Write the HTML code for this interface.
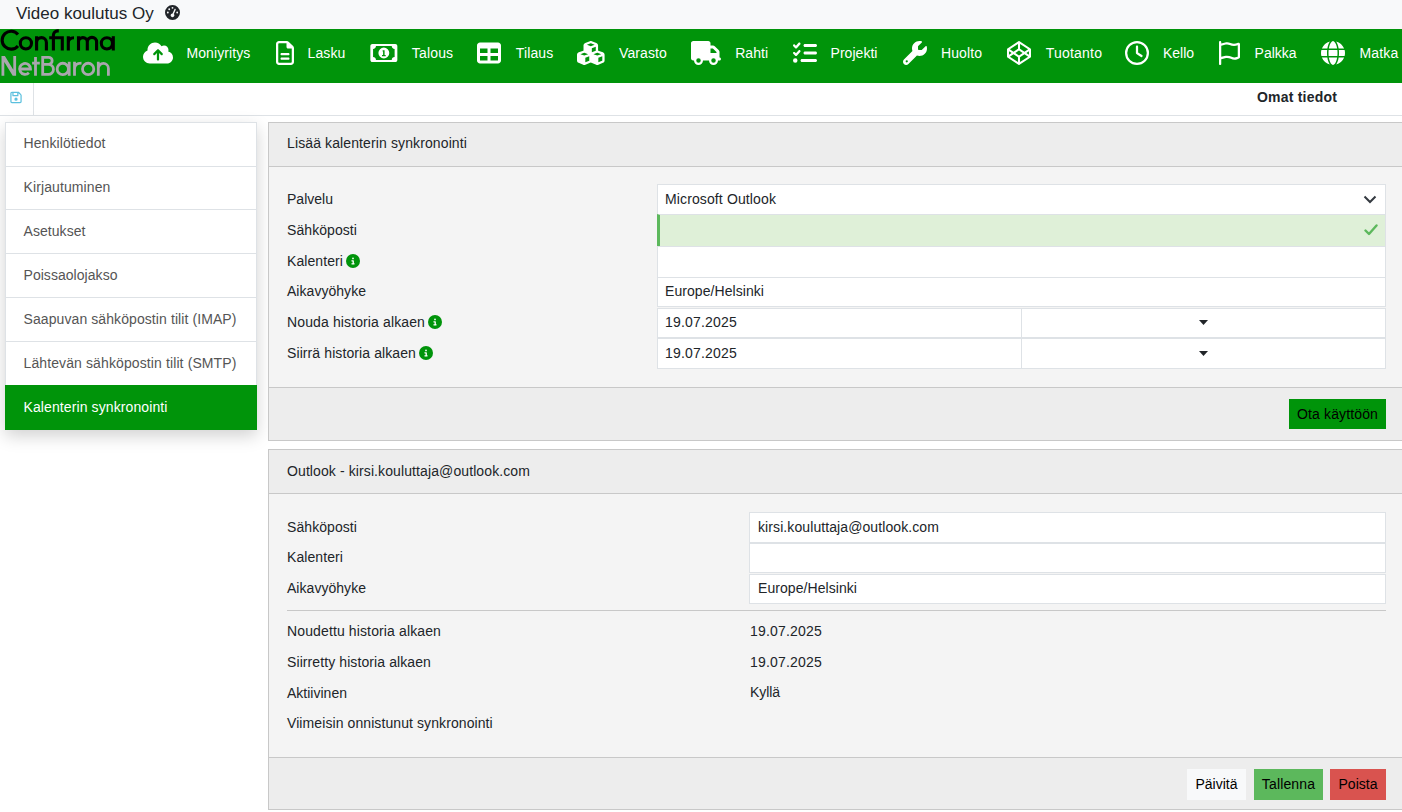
<!DOCTYPE html>
<html><head><meta charset="utf-8">
<style>
*{box-sizing:border-box}
html,body{margin:0;padding:0}
body{width:1402px;height:812px;overflow:hidden;position:relative;background:#fff;font-family:"Liberation Sans",sans-serif;font-size:14px;color:#212529}
.a{position:absolute;white-space:nowrap}
.t{line-height:20px;height:20px}
#top{left:0;top:0;width:1402px;height:29px;background:#f8f9fa}
#nav{left:0;top:29px;width:1402px;height:54px;background:#00940a;overflow:hidden}
.ni{position:absolute;top:14px;color:#fff;line-height:20px;font-size:14px;white-space:nowrap}
.ic{position:absolute;top:11.5px;height:24px;fill:#fff}
#tb{left:0;top:83px;width:1402px;height:33px;border-bottom:1px solid #dee2e6;background:#fff}
#menu{left:5px;top:122px;width:252px;height:308px;background:#fff;border:1px solid #dee2e6;box-shadow:0 6px 16px rgba(0,0,0,.18)}
.sep{left:6px;width:250px;height:1px;background:#dee2e6}
.mt{left:23.5px;line-height:20px;color:#555}
.panel{left:268px;width:1150px;border:1px solid #c8c8c8;background:#f4f4f4}
.ph{left:269px;width:1140px;background:#ededed;border-bottom:1px solid #c8c8c8}
.pf{left:269px;width:1140px;background:#ededed;border-top:1px solid #c8c8c8}
.inp{background:#fff;border:1px solid #dee2e6}
.L{left:287px;line-height:20px}
.info{display:inline-block;width:14px;height:14px;border-radius:50%;background:#00940a;vertical-align:-2px;margin-left:3px;position:relative}
.info svg{position:absolute;left:0;top:0}
.btn{position:absolute;height:31px;line-height:31px;text-align:center;color:#000}
</style></head><body>

<div id="top" class="a">
  <div class="a" style="left:16px;top:4px;font-size:17px;line-height:20px">Video koulutus Oy</div>
  <svg class="a" style="left:165px;top:5px" width="15" height="15" viewBox="0 0 512 512"><path fill="#212529" d="M0 256a256 256 0 1 1 512 0A256 256 0 1 1 0 256zM288 96a32 32 0 1 0 -64 0 32 32 0 1 0 64 0zM256 416c35.3 0 64-28.7 64-64c0-17.4-6.9-33.1-18.1-44.6L366 161.7c5.3-12.1-.2-26.3-12.3-31.6s-26.3 .2-31.6 12.3L257.9 288c-.6 0-1.3 0-1.9 0c-35.3 0-64 28.7-64 64s28.7 64 64 64zM176 144a32 32 0 1 0 -64 0 32 32 0 1 0 64 0zM96 288a32 32 0 1 0 0-64 32 32 0 1 0 0 64zm352-32a32 32 0 1 0 -64 0 32 32 0 1 0 64 0z"/></svg>
</div>

<div id="nav" class="a">
  <svg class="a" style="left:0;top:0" width="120" height="54" viewBox="0 0 120 54" fill="none" stroke-linecap="butt">
    <g stroke="#000" stroke-width="3.1">
      <path d="M17.96 5.45A8.95 8.95 0 1 0 17.96 16.95"/>
      <circle cx="25.9" cy="14.35" r="5.6"/>
      <path d="M36.6 21.5V7.2M36.6 13.5A4.9 4.9 0 0 1 46.4 13.5V21.5"/>
      <path d="M53.4 21.5V6.35A4.5 4.5 0 0 1 57.9 1.85H58.8M49.2 8.75H63.85M62.3 8.75V21.5"/>
      <path d="M68.3 21.5V7.2M68.3 14Q68.3 8.75 74 8.75"/>
      <path d="M78.5 21.5V7.2M78.5 13A4.4 4.4 0 0 1 87.3 13V21.5M87.3 13A4.65 4.65 0 0 1 96.6 13V21.5"/>
      <circle cx="106.9" cy="14.35" r="5.6"/>
      <path d="M113.3 7.2V21.5"/>
    </g>
    <g stroke="#aaa6ae" stroke-width="2.8">
      <path d="M1.5 46.8V26.9H4.9L13.3 40.8V26.9H16.1V46.8H12.7L4.3 32.9V46.8Z" fill="#aaa6ae" stroke="none"/>
      <path d="M19.6 40H30.5A5.45 5.45 0 1 0 28.9 43.7"/>
      <path d="M35.5 28V46.8M32.1 34.05H39.8"/>
      <path d="M41.3 28.3H48.6A3.55 3.55 0 0 1 48.6 35.4H42.7M42.7 28.3V46.8M42.7 35.4H48.4A5 5 0 0 1 48.4 45.4H41.3"/>
      <circle cx="62.8" cy="39.9" r="5.65"/>
      <path d="M69.2 32.8V46.8"/>
      <path d="M74.5 32.8V46.8M74.5 40Q74.5 34.2 81.5 34.2"/>
      <circle cx="88.15" cy="39.9" r="5.65"/>
      <path d="M98.3 32.8V46.8M98.3 39.5A5.05 5.05 0 0 1 108.4 39.5V46.8"/>
    </g>
  </svg>
  <!-- icons -->
  <svg class="ic" style="left:142.7px" width="30" viewBox="0 0 640 512"><path d="M144 480C64.5 480 0 415.5 0 336c0-62.8 40.2-116.2 96.2-135.9c-.1-2.7-.2-5.4-.2-8.1c0-88.4 71.6-160 160-160c59.3 0 111 32.2 138.7 80.2C409.9 102 428.3 96 448 96c53 0 96 43 96 96c0 12.2-2.3 23.8-6.4 34.6C596 238.4 640 290.1 640 352c0 70.7-57.3 128-128 128H144zm79-217c-9.4 9.4-9.4 24.6 0 33.9s24.6 9.4 33.9 0l39-39V392c0 13.3 10.7 24 24 24s24-10.7 24-24V257.9l39 39c9.4 9.4 24.6 9.4 33.9 0s9.4-24.6 0-33.9l-80-80c-9.4-9.4-24.6-9.4-33.9 0l-80 80z"/></svg>
  <div class="ni" style="left:186.4px;letter-spacing:0.099px">Moniyritys</div>
  <svg class="ic" style="left:276px" width="18" viewBox="0 0 384 512"><path d="M64 464c-8.8 0-16-7.2-16-16V64c0-8.8 7.2-16 16-16H224v80c0 17.7 14.3 32 32 32h80V448c0 8.8-7.2 16-16 16H64zM64 0C28.7 0 0 28.7 0 64V448c0 35.3 28.7 64 64 64H320c35.3 0 64-28.7 64-64V154.5c0-17-6.7-33.3-18.7-45.3L274.7 18.7C262.7 6.7 246.5 0 229.5 0H64zm56 256c-13.3 0-24 10.7-24 24s10.7 24 24 24H264c13.3 0 24-10.7 24-24s-10.7-24-24-24H120zm0 96c-13.3 0-24 10.7-24 24s10.7 24 24 24H264c13.3 0 24-10.7 24-24s-10.7-24-24-24H120z"/></svg>
  <div class="ni" style="left:307.5px;letter-spacing:0.128px">Lasku</div>
  <svg class="ic" style="left:370.2px" width="27.7" viewBox="0 0 576 512"><path fill-rule="evenodd" d="M44 64H532c24.3 0 44 19.7 44 44V404c0 24.3-19.7 44-44 44H44c-24.3 0-44-19.7-44-44V108C0 83.7 19.7 64 44 64zM120 108c0 34-28 62-62 62V342c34 0 62 28 62 62H456c0-34 28-62 62-62V170c-34 0-62-28-62-62H120zM288 140a116 116 0 1 1 0 232a116 116 0 1 1 0-232zM262 196H304V300H328V324H248V300H272V226H262Z"/></svg>
  <div class="ni" style="left:411.8px;letter-spacing:0.163px">Talous</div>
  <svg class="ic" style="left:477px" width="24" viewBox="0 0 512 512"><path fill-rule="evenodd" d="M64 32H448c35.3 0 64 28.7 64 64V416c0 35.3-28.7 64-64 64H64c-35.3 0-64-28.7-64-64V96C0 60.7 28.7 32 64 32zM64 160V256H224V160H64zM288 160V256H448V160H288zM64 320V416H224V320H64zM288 320V416H448V320H288z"/></svg>
  <div class="ni" style="left:515.8px;letter-spacing:0.109px">Tilaus</div>
  <svg class="ic" style="left:577.1px" width="27.6" viewBox="0 0 576 512" preserveAspectRatio="none"><path d="M290.8 48.6l78.4 29.7L288 109.5 206.8 78.3l78.4-29.7c1.8-.7 3.8-.7 5.7 0zM136 92.5V204.7c-1.3 .4-2.6 .8-3.9 1.3l-96 36.4C14.4 250.6 0 271.5 0 294.7V413.9c0 22.2 13.1 42.3 33.5 51.3l96 42.2c14.4 6.3 30.7 6.3 45.1 0L288 457.5l113.5 49.9c14.4 6.3 30.7 6.3 45.1 0l96-42.2c20.3-8.9 33.5-29.1 33.5-51.3V294.7c0-23.3-14.4-44.1-36.1-52.4l-96-36.4c-1.3-.5-2.6-.9-3.9-1.3V92.5c0-23.3-14.4-44.1-36.1-52.4l-96-36.4c-12.8-4.8-26.9-4.8-39.7 0l-96 36.4C150.4 48.4 136 69.3 136 92.5zM392 210.6l-82.4 31.2V152.6L392 121v89.6zM154.8 250.9l78.4 29.7L152 311.7 70.8 280.6l78.4-29.7c1.8-.7 3.8-.7 5.7 0zm18.8 204.4V354.8L256 323.2v95.9l-82.4 36.2zM421.2 250.9c1.8-.7 3.8-.7 5.7 0l78.4 29.7L424 311.7l-81.2-31.1 78.4-29.7zM523.2 421.2l-77.6 34.1V354.8L528 323.2v90.7c0 3.2-1.9 6-4.8 7.3z"/></svg>
  <div class="ni" style="left:619px;letter-spacing:0.107px">Varasto</div>
  <svg class="ic" style="left:690.5px" width="30" viewBox="0 0 640 512"><path d="M48 0C21.5 0 0 21.5 0 48V368c0 26.5 21.5 48 48 48H64c0 53 43 96 96 96s96-43 96-96H384c0 53 43 96 96 96s96-43 96-96h32c17.7 0 32-14.3 32-32s-14.3-32-32-32V288 256 237.3c0-17-6.7-33.3-18.7-45.3L512 114.7c-12-12-28.3-18.7-45.3-18.7H416V48c0-26.5-21.5-48-48-48H48zM416 160h50.7L544 237.3V256H416V160zM112 416a48 48 0 1 1 96 0 48 48 0 1 1 -96 0zm368-48a48 48 0 1 1 0 96 48 48 0 1 1 0-96z"/></svg>
  <div class="ni" style="left:735.2px;letter-spacing:0.063px">Rahti</div>
  <svg class="ic" style="left:792.5px" width="24" viewBox="0 0 512 512"><path d="M152.1 38.2c9.9 8.9 10.7 24 1.8 33.9l-72 80c-4.4 4.9-10.6 7.8-17.2 7.9s-12.9-2.4-17.6-7L7 113C-2.3 103.6-2.3 88.4 7 79s24.6-9.4 33.9 0l22.1 22.1 55.1-61.2c8.9-9.9 24-10.7 33.9-1.8zm0 160c9.9 8.9 10.7 24 1.8 33.9l-72 80c-4.4 4.9-10.6 7.8-17.2 7.9s-12.9-2.4-17.6-7L7 273c-9.4-9.4-9.4-24.6 0-33.9s24.6-9.4 33.9 0l22.1 22.1 55.1-61.2c8.9-9.9 24-10.7 33.9-1.8zM224 96c0-17.7 14.3-32 32-32H480c17.7 0 32 14.3 32 32s-14.3 32-32 32H256c-17.7 0-32-14.3-32-32zm0 160c0-17.7 14.3-32 32-32H480c17.7 0 32 14.3 32 32s-14.3 32-32 32H256c-17.7 0-32-14.3-32-32zM160 416c0-17.7 14.3-32 32-32H480c17.7 0 32 14.3 32 32s-14.3 32-32 32H192c-17.7 0-32-14.3-32-32zM48 368a48 48 0 1 1 0 96 48 48 0 1 1 0-96z"/></svg>
  <div class="ni" style="left:830.5px;letter-spacing:0.040px">Projekti</div>
  <svg class="ic" style="left:902.5px" width="24" viewBox="0 0 512 512"><path d="M352 320c88.4 0 160-71.6 160-160c0-15.3-2.2-30.1-6.2-44.2c-3.1-10.8-16.4-13.2-24.3-5.3l-76.8 76.8c-3 3-7.1 4.7-11.3 4.7H336c-8.8 0-16-7.2-16-16V118.6c0-4.2 1.7-8.3 4.7-11.3l76.8-76.8c7.9-7.9 5.4-21.2-5.3-24.3C382.1 2.2 367.3 0 352 0C263.6 0 192 71.6 192 160c0 19.1 3.4 37.5 9.5 54.5L19.9 396.1C7.2 408.8 0 426.1 0 444.1C0 481.6 30.4 512 67.9 512c18 0 35.3-7.2 48-19.9L297.5 310.5c17 6.2 35.4 9.5 54.5 9.5zM80 408a24 24 0 1 1 0 48 24 24 0 1 1 0-48z"/></svg>
  <div class="ni" style="left:941px;letter-spacing:0.089px">Huolto</div>
  <svg class="ic" style="left:1006.5px" width="24" viewBox="0 0 512 512"><path d="M502.3 159.7l-234-156c-8-4.9-16.5-5-24.6 0l-234 156C3.7 163.7 0 170.8 0 178v156c0 7.1 3.7 14.2 9.7 18.3l234 156c8 4.9 16.5 5 24.6 0l234-156c6-4 9.7-11.1 9.7-18.3V178c0-7.1-3.7-14.2-9.7-18.3zM278 63.1l172.3 114.9-76.9 51.4L278 165.7V63.1zm-44 0v102.6l-95.4 63.7-76.9-51.4L234 63.1zM44 219.1l55.1 36.9L44 292.8v-73.7zm190 229.7L61.7 334l76.9-51.4L234 346.3v102.6zm22-140.9l-77.7-52 77.7-52 77.7 52-77.7 52zm22 140.9V346.3l95.4-63.7 76.9 51.4L278 448.8zm190-156l-55.1-36.9L468 219.1v73.7z"/></svg>
  <div class="ni" style="left:1045.7px;letter-spacing:0.217px">Tuotanto</div>
  <svg class="ic" style="left:1125px" width="24" viewBox="0 0 512 512"><path d="M464 256A208 208 0 1 1 48 256a208 208 0 1 1 416 0zM0 256a256 256 0 1 0 512 0A256 256 0 1 0 0 256zM232 120V256c0 8 4 15.5 10.7 20l96 64c11 7.4 25.9 4.4 33.3-6.7s4.4-25.9-6.7-33.3L280 243.2V120c0-13.3-10.7-24-24-24s-24 10.7-24 24z"/></svg>
  <div class="ni" style="left:1163px;letter-spacing:-0.026px">Kello</div>
  <svg class="ic" style="left:1219px" width="21" viewBox="0 0 448 512"><path d="M48 24C48 10.7 37.3 0 24 0S0 10.7 0 24V64 350.5 400v88c0 13.3 10.7 24 24 24s24-10.7 24-24V388l80.3-20.1c41.1-10.3 84.6-5.5 122.5 13.4c44.2 22.1 95.5 24.8 141.7 7.4l34.7-13c12.5-4.7 20.8-16.6 20.8-30V66.1c0-23-24.2-38-44.8-27.7l-9.6 4.8c-46.3 23.2-100.8 23.2-147.1 0c-35.1-17.6-75.4-22-113.5-12.5L48 52V24zm0 77.5l96.6-24.2c27-6.7 55.5-3.6 80.4 8.8c54.9 27.4 118.7 29.7 175 6.8V334.7l-24.4 9.1c-33.7 12.6-71.2 10.7-103.4-5.4c-48.2-24.1-103.3-30.1-155.6-17.1L48 338.5v-237z"/></svg>
  <div class="ni" style="left:1254.6px;letter-spacing:-0.003px">Palkka</div>
  <svg class="ic" style="left:1321px" width="24" viewBox="0 0 512 512"><path d="M352 256c0 22.2-1.2 43.6-3.3 64H163.3c-2.2-20.4-3.3-41.8-3.3-64s1.2-43.6 3.3-64H348.7c2.2 20.4 3.3 41.8 3.3 64zm28.8-64H503.9c5.3 20.5 8.1 41.9 8.1 64s-2.8 43.5-8.1 64H380.8c2.1-20.6 3.2-42 3.2-64s-1.1-43.4-3.2-64zm112.6-32H376.7c-10-63.9-29.8-117.4-55.3-151.6c78.3 20.7 142 77.5 171.9 151.6zm-149.1 0H167.7c6.1-36.4 15.5-68.6 27-94.7c10.5-23.6 22.2-40.7 33.5-51.5C239.4 3.2 248.7 0 256 0s16.6 3.2 27.8 13.8c11.3 10.8 23 27.9 33.5 51.5c11.6 26 20.9 58.2 27 94.7zm-209 0H18.6C48.6 85.9 112.2 29.1 190.6 8.4C165.1 42.6 145.3 96.1 135.3 160zM8.1 192H131.2c-2.1 20.6-3.2 42-3.2 64s1.1 43.4 3.2 64H8.1C2.8 299.5 0 278.1 0 256s2.8-43.5 8.1-64zM194.7 446.6c-11.6-26-20.9-58.2-27-94.6H344.3c-6.1 36.4-15.5 68.6-27 94.6c-10.5 23.6-22.2 40.7-33.5 51.5C272.6 508.8 263.3 512 256 512s-16.6-3.2-27.8-13.8c-11.3-10.8-23-27.9-33.5-51.5zM135.3 352c10 63.9 29.8 117.4 55.3 151.6C112.2 482.9 48.6 426.1 18.6 352H135.3zm358.1 0c-30 74.1-93.6 130.9-171.9 151.6c25.5-34.2 45.2-87.7 55.3-151.6H493.4z"/></svg>
  <div class="ni" style="left:1359.4px;letter-spacing:0.175px">Matka</div>
</div>

<div id="tb" class="a">
  <svg class="a" style="left:10px;top:8px" width="12" height="13" viewBox="0 0 448 512"><path fill="#5bc0de" d="M48 96V416c0 8.8 7.2 16 16 16H384c8.8 0 16-7.2 16-16V170.5c0-4.2-1.7-8.3-4.7-11.3l33.9-33.9c12 12 18.7 28.3 18.7 45.3V416c0 35.3-28.7 64-64 64H64c-35.3 0-64-28.7-64-64V96C0 60.7 28.7 32 64 32H309.5c17 0 33.3 6.7 45.3 18.7l74.5 74.5-33.9 33.9L320.8 84.7c-.3-.3-.5-.5-.8-.8V184c0 13.3-10.7 24-24 24H104c-13.3 0-24-10.7-24-24V80H64c-8.8 0-16 7.2-16 16zm80-16v80H272V80H128zm32 240a64 64 0 1 1 128 0 64 64 0 1 1 -128 0z"/></svg>
  <div class="a" style="left:33px;top:0;width:1px;height:32px;background:#dee2e6"></div>
  <div class="a" style="left:1257px;top:4px;font-weight:bold;line-height:20px;color:#212529;letter-spacing:0.202px">Omat tiedot</div>
</div>

<div id="menu" class="a"></div>
<div class="a sep" style="top:166px"></div>
<div class="a sep" style="top:209px"></div>
<div class="a sep" style="top:253px"></div>
<div class="a sep" style="top:297px"></div>
<div class="a sep" style="top:341px"></div>
<div class="a" style="left:5px;top:385px;width:252px;height:45px;background:#00940a"></div>
<div class="a mt" style="top:133px;letter-spacing:0.082px">Henkilötiedot</div>
<div class="a mt" style="top:177px;letter-spacing:0.108px">Kirjautuminen</div>
<div class="a mt" style="top:221px;letter-spacing:0.058px">Asetukset</div>
<div class="a mt" style="top:265px;letter-spacing:0.044px">Poissaolojakso</div>
<div class="a mt" style="top:309px;letter-spacing:0.088px">Saapuvan sähköpostin tilit (IMAP)</div>
<div class="a mt" style="top:353px;letter-spacing:0.112px">Lähtevän sähköpostin tilit (SMTP)</div>
<div class="a mt" style="top:397px;color:#fff;letter-spacing:0.103px">Kalenterin synkronointi</div>

<!-- Panel 1 -->
<div class="a panel" style="top:122px;height:319px"></div>
<div class="a ph" style="top:123px;height:44px"></div>
<div class="a pf" style="top:387px;height:53px"></div>
<div class="a L" style="top:133px;letter-spacing:0.115px">Lisää kalenterin synkronointi</div>
<div class="a L" style="top:189px;letter-spacing:0.012px">Palvelu</div>
<div class="a L" style="top:220px;letter-spacing:0.073px">Sähköposti</div>
<div class="a L" style="top:251px;letter-spacing:0.083px">Kalenteri<span class="info"><svg width="14" height="14" viewBox="0 0 512 512"><path fill="#fff" d="M256 128a32 32 0 1 1 0 64a32 32 0 1 1 0-64zM216 224h48c13.3 0 24 10.7 24 24v88h8c13.3 0 24 10.7 24 24s-10.7 24-24 24H216c-13.3 0-24-10.7-24-24s10.7-24 24-24h24V272H216c-13.3 0-24-10.7-24-24s10.7-24 24-24z"/></svg></span></div>
<div class="a L" style="top:281px;letter-spacing:0.037px">Aikavyöhyke</div>
<div class="a L" style="top:312px;letter-spacing:0.123px">Nouda historia alkaen<span class="info"><svg width="14" height="14" viewBox="0 0 512 512"><path fill="#fff" d="M256 128a32 32 0 1 1 0 64a32 32 0 1 1 0-64zM216 224h48c13.3 0 24 10.7 24 24v88h8c13.3 0 24 10.7 24 24s-10.7 24-24 24H216c-13.3 0-24-10.7-24-24s10.7-24 24-24h24V272H216c-13.3 0-24-10.7-24-24s10.7-24 24-24z"/></svg></span></div>
<div class="a L" style="top:343px;letter-spacing:0.098px">Siirrä historia alkaen<span class="info"><svg width="14" height="14" viewBox="0 0 512 512"><path fill="#fff" d="M256 128a32 32 0 1 1 0 64a32 32 0 1 1 0-64zM216 224h48c13.3 0 24 10.7 24 24v88h8c13.3 0 24 10.7 24 24s-10.7 24-24 24H216c-13.3 0-24-10.7-24-24s10.7-24 24-24h24V272H216c-13.3 0-24-10.7-24-24s10.7-24 24-24z"/></svg></span></div>

<div class="a inp" style="left:657px;top:184px;width:729px;height:31px"></div>
<div class="a L" style="left:665px;top:189px;letter-spacing:0.122px">Microsoft Outlook</div>
<svg class="a" style="left:1363px;top:195px" width="14" height="9" viewBox="0 0 14 9"><path d="M1.5 1.5L7 7L12.5 1.5" fill="none" stroke="#343a40" stroke-width="2"/></svg>
<div class="a inp" style="left:657px;top:214px;width:729px;height:33px;background:#dff0d8;border-left:3px solid #5cb85c"></div>
<svg class="a" style="left:1364px;top:224px" width="14" height="12" viewBox="0 0 14 12"><path d="M1.5 6.5L5 10L12.5 1.5" fill="none" stroke="#5cb85c" stroke-width="2.4" stroke-linecap="round" stroke-linejoin="round"/></svg>
<div class="a inp" style="left:657px;top:246px;width:729px;height:32px"></div>
<div class="a inp" style="left:657px;top:277px;width:729px;height:30px"></div>
<div class="a L" style="left:665px;top:281px;letter-spacing:0.063px">Europe/Helsinki</div>
<div class="a inp" style="left:657px;top:308px;width:365px;height:30px"></div>
<div class="a inp" style="left:1021px;top:308px;width:365px;height:30px"></div>
<div class="a inp" style="left:657px;top:338px;width:365px;height:31px"></div>
<div class="a inp" style="left:1021px;top:338px;width:365px;height:31px"></div>
<div class="a L" style="left:665px;top:312px;letter-spacing:0.193px">19.07.2025</div>
<div class="a L" style="left:665px;top:343px;letter-spacing:0.193px">19.07.2025</div>
<svg class="a" style="left:1199px;top:320px" width="9" height="5" viewBox="0 0 9 5"><path d="M0 0H9L4.5 5Z" fill="#212529"/></svg>
<svg class="a" style="left:1199px;top:351px" width="9" height="5" viewBox="0 0 9 5"><path d="M0 0H9L4.5 5Z" fill="#212529"/></svg>
<div class="a btn" style="left:1289px;top:399px;width:97px;height:30px;line-height:30px;background:#00940a;letter-spacing:0.135px">Ota käyttöön</div>

<!-- Panel 2 -->
<div class="a panel" style="top:449px;height:361px"></div>
<div class="a ph" style="top:450px;height:44px"></div>
<div class="a pf" style="top:757px;height:52px"></div>
<div class="a L" style="top:461px;letter-spacing:0.103px">Outlook - kirsi.kouluttaja@outlook.com</div>
<div class="a L" style="top:517px;letter-spacing:0.073px">Sähköposti</div>
<div class="a L" style="top:547px;letter-spacing:0.083px">Kalenteri</div>
<div class="a L" style="top:578px;letter-spacing:0.037px">Aikavyöhyke</div>
<div class="a" style="left:287px;top:610px;width:1099px;height:1px;background:#c8c8c8"></div>
<div class="a L" style="top:621px;letter-spacing:0.126px">Noudettu historia alkaen</div>
<div class="a L" style="top:652px;letter-spacing:0.095px">Siirretty historia alkaen</div>
<div class="a L" style="top:683px;letter-spacing:0.008px">Aktiivinen</div>
<div class="a L" style="top:713px;letter-spacing:0.088px">Viimeisin onnistunut synkronointi</div>

<div class="a inp" style="left:749px;top:512px;width:637px;height:31px"></div>
<div class="a inp" style="left:749px;top:543px;width:637px;height:30px"></div>
<div class="a inp" style="left:749px;top:574px;width:637px;height:30px"></div>
<div class="a L" style="left:758px;top:517px;letter-spacing:0.093px">kirsi.kouluttaja@outlook.com</div>
<div class="a L" style="left:758px;top:578px;letter-spacing:0.063px">Europe/Helsinki</div>
<div class="a L" style="left:750px;top:621px;letter-spacing:0.193px">19.07.2025</div>
<div class="a L" style="left:750px;top:652px;letter-spacing:0.193px">19.07.2025</div>
<div class="a L" style="left:750px;top:682px;letter-spacing:-0.069px">Kyllä</div>

<div class="a btn" style="left:1187px;top:769px;width:59px;background:#f8f9fa;letter-spacing:-0.003px">Päivitä</div>
<div class="a btn" style="left:1254px;top:769px;width:69px;background:#5cb85c;letter-spacing:0.162px">Tallenna</div>
<div class="a btn" style="left:1330px;top:769px;width:56px;background:#d9534f;letter-spacing:0.015px">Poista</div>

</body></html>
